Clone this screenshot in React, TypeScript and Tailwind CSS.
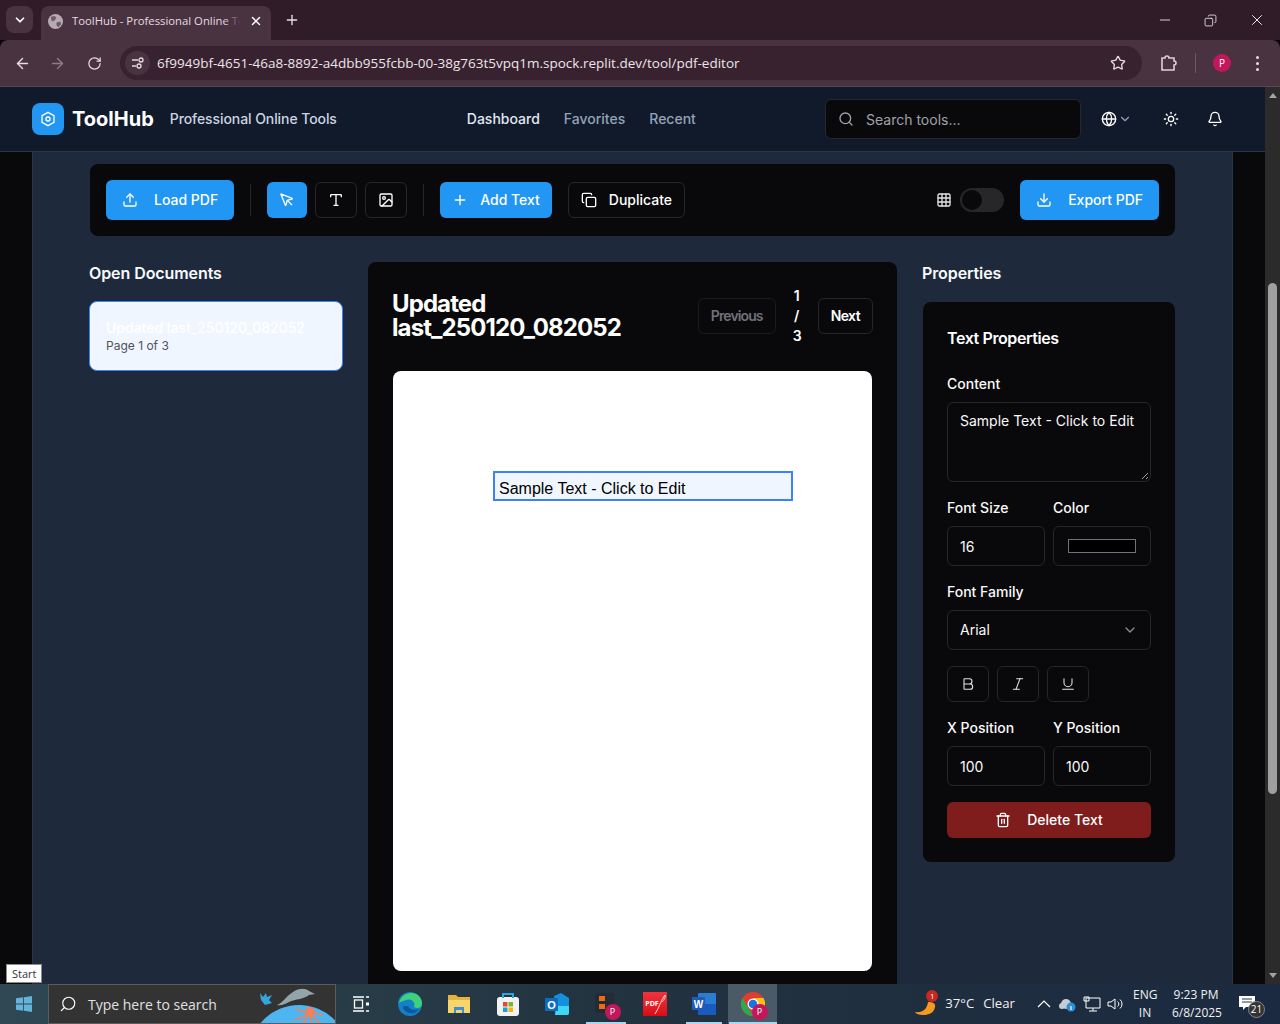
import {
  ArrowLeft, ArrowRight, Bell, Bold, ChevronDown, Copy, Download, Globe, Grid3x3, Image, Italic,
  MousePointer, Plus, RotateCw, Search, Star, Sun, Trash2, Type, Underline, Upload, X, Minus,
} from "lucide-react";
import type { ReactNode } from "react";

const inter = "font-['Inter',sans-serif]";
const segoe = "font-['Open_Sans',sans-serif]";

function BrowserBar() {
  return (
    <div className={`${segoe} shrink-0`}>
      <div className="flex h-10 items-end bg-[#2f1c28] pl-[6px]">
        <div className="mb-[1px] flex h-[27px] w-[27px] items-center justify-center self-center rounded-lg bg-[#4a3340] text-white">
          <ChevronDown size={14} strokeWidth={3} />
        </div>
        <div className="ml-[8px] flex h-[34px] w-[230px] items-center rounded-t-lg bg-[#4a3340] pb-1 pl-[7px]">
          <svg className="shrink-0" width="15" height="15" viewBox="0 0 16 16">
            <circle cx="8" cy="8" r="8" fill="#b8aab2" />
            <path d="M3 3l4-1 2 2-2 3-3 1zM9 9l4-1 1 3-3 3-2-2z" fill="#6d5b66" />
          </svg>
          <div className="relative ml-[9px] w-[168px] overflow-hidden text-[11.3px] whitespace-nowrap text-[#e4dce1]">
            ToolHub - Professional Online Tools
            <div className="absolute inset-y-0 right-0 w-4 bg-gradient-to-r from-transparent to-[#4a3340]" />
          </div>
          <X size={14} className="ml-[9px] text-white" strokeWidth={2.5} />
        </div>
        <Plus size={16} className="ml-[13px] self-center text-[#e8e0e5]" />
        <div className="flex-1" />
        <div className="flex items-center gap-[31px] self-center pr-[14px] text-white">
          <Minus size={16} strokeWidth={1.2} />
          <Copy size={13} strokeWidth={1.4} className="-scale-x-100" />
          <X size={18} strokeWidth={1.2} />
        </div>
      </div>
      <div className="flex h-[47px] items-center rounded-t-lg border-b border-[#5a4450] bg-[#4a3340] pl-[14px] pr-[14px] text-[#e4dce1]">
        <ArrowLeft size={17} />
        <ArrowRight size={17} className="ml-[18px] text-[#8d7b85]" />
        <RotateCw size={15} className="ml-[21px]" />
        <div className="ml-[18px] flex h-[34px] w-[1022px] items-center rounded-full bg-[#38222f] pl-[5px] pr-[16px]">
          <div className="flex h-6 w-[25px] items-center justify-center rounded-full bg-[#4a3340]">
            <svg width="14" height="14" viewBox="0 0 14 14" fill="none" stroke="#e4dce1" strokeWidth="1.3">
              <path d="M1 4h6M1 10h4" />
              <circle cx="10" cy="4" r="2" />
              <circle cx="8" cy="10" r="2" />
            </svg>
          </div>
          <span className="ml-[7px] text-[13.5px] text-[#ece5e9]">6f9949bf-4651-46a8-8892-a4dbb955fcbb-00-38g763t5vpq1m.spock.replit.dev/tool/pdf-editor</span>
          <div className="flex-1" />
          <Star size={16} className="text-[#e4dce1]" strokeWidth={2} />
        </div>
        <svg className="ml-[17px]" width="18" height="18" viewBox="0 0 18 18" fill="none" stroke="#e0cfd9" strokeWidth="1.6">
          <path d="M3 4h3a2 2 0 0 1 4 0h5v3a2 2 0 0 1 0 4v5H3z" />
        </svg>
        <div className="ml-[18px] h-5 w-px bg-[#6d5763]" />
        <div className="ml-[17px] flex h-[18px] w-[18px] items-center justify-center rounded-full bg-[#c2185b] text-[10px] text-white">P</div>
        <div className="ml-[25px] flex flex-col gap-[3px]">
          <span className="h-[3px] w-[3px] rounded-full bg-[#e4dce1]" />
          <span className="h-[3px] w-[3px] rounded-full bg-[#e4dce1]" />
          <span className="h-[3px] w-[3px] rounded-full bg-[#e4dce1]" />
        </div>
      </div>
    </div>
  );
}

function SiteHeader() {
  return (
    <header className="flex h-[65px] shrink-0 items-center border-b border-[#2a3648] bg-[#111a2b] pl-8 pr-[42px]">
      <div className="flex h-8 w-8 items-center justify-center rounded-lg bg-[#2196f3]">
        <svg width="16" height="16" viewBox="0 0 24 24" fill="none" stroke="white" strokeWidth="2">
          <path d="M12 2l9 5v10l-9 5-9-5V7z" />
          <circle cx="12" cy="12" r="3" />
        </svg>
      </div>
      <span className="ml-2 text-[20px] leading-7 font-bold text-white">ToolHub</span>
      <span className="ml-4 pb-px text-[14px] font-medium tracking-[-0.08px] text-[#cbd5e1]">Professional Online Tools</span>
      <nav className="ml-[130px] flex gap-6 pb-px text-[14px] font-medium">
        <span className="text-[#e2e8f0]">Dashboard</span>
        <span className="text-[#94a3b8]">Favorites</span>
        <span className="text-[#94a3b8]">Recent</span>
      </nav>
      <div className="flex-1" />
      <div className="flex h-10 w-[256px] items-center rounded-md border border-[#27272a] bg-[#09090b] pl-3">
        <Search size={16} className="text-[#a1a1aa]" />
        <span className="ml-3 text-[14px] text-[#a1a1aa]">Search tools...</span>
      </div>
      <Globe size={16} className="ml-[20px] text-white" />
      <ChevronDown size={14} className="ml-[1px] text-[#94a3b8]" />
      <Sun size={16} className="ml-[31px] text-white" />
      <Bell size={16} className="ml-[28px] text-white" />
    </header>
  );
}

function BlueButton({ icon, label, tall, gap }: { icon: ReactNode; label: string; tall?: boolean; gap: string }) {
  return (
    <div className={`flex items-center rounded-md bg-[#2196f3] text-[14px] font-medium text-white ${tall ? "h-10 px-4" : "h-9 px-3"} ${gap}`}>
      {icon}
      <span className="pb-px">{label}</span>
    </div>
  );
}

function ToolButton({ children, className }: { children: ReactNode; className?: string }) {
  return <div className={`flex h-9 w-[42px] items-center justify-center rounded-md border border-[#27272a] bg-[#09090b] text-white ${className ?? ""}`}>{children}</div>;
}

function Divider() {
  return <div className="h-8 w-px bg-[#27272a]" />;
}

function EditorToolbar() {
  return (
    <div className="ml-[57px] flex h-[72px] w-[1085px] items-center rounded-lg bg-[#09090b] px-4">
      <BlueButton tall gap="gap-4" icon={<Upload size={16} />} label="Load PDF" />
      <div className="mx-4"><Divider /></div>
      <div className="flex h-9 w-10 items-center justify-center rounded-md bg-[#2196f3] text-white"><MousePointer size={16} /></div>
      <ToolButton className="ml-2"><Type size={16} /></ToolButton>
      <ToolButton className="ml-2"><Image size={16} /></ToolButton>
      <div className="mx-4"><Divider /></div>
      <BlueButton gap="gap-3" icon={<Plus size={16} />} label="Add Text" />
      <div className="ml-4 flex h-9 items-center gap-3 rounded-md border border-[#27272a] px-3 text-[14px] font-medium text-white">
        <Copy size={16} />
        <span className="pb-px">Duplicate</span>
      </div>
      <div className="flex-1" />
      <Grid3x3 size={16} className="text-[#e4e4e7]" />
      <div className="ml-[8px] flex h-6 w-11 items-center rounded-full border-2 border-[#27272a] bg-[#27272a]">
        <div className="h-5 w-5 rounded-full bg-[#09090b]" />
      </div>
      <div className="ml-4">
        <BlueButton tall gap="gap-[16px]" icon={<Download size={16} />} label="Export PDF" />
      </div>
    </div>
  );
}

function DocumentsPanel() {
  return (
    <aside className="w-[254px] shrink-0">
      <h2 className="-mt-px text-[16px] leading-6 font-semibold tracking-[-0.08px] text-[#f8fafc]">Open Documents</h2>
      <div className="mt-4 h-[70px] rounded-lg border border-[#3b82f6] bg-[#eff6ff] px-4 pt-4">
        <p className="text-[14px] leading-5 font-medium text-white">Updated last_250120_082052</p>
        <p className="text-[12px] leading-4 text-[#52525b]">Page 1 of 3</p>
      </div>
    </aside>
  );
}

function PdfPanel() {
  return (
    <section className="ml-[25px] h-[800px] w-[529px] shrink-0 rounded-t-lg bg-[#09090b] px-6 pt-6">
      <div className="flex items-center">
        <h1 className="flex-1 text-[24px] leading-6 font-bold tracking-[-0.9px] text-white">
          Updated<br />last_250120_082052
        </h1>
        <div className="flex h-9 items-center rounded-md border border-[#1c1c1f] px-3 pb-px text-[14px] font-semibold tracking-[-0.9px] text-[#71717a]">Previous</div>
        <div className="mx-[17px] w-[8px] text-center text-[14px] leading-5 font-semibold text-white">1<br />/<br />3</div>
        <div className="flex h-9 items-center rounded-md border border-[#27272a] px-3 pb-px text-[14px] font-semibold tracking-[-0.6px] text-white">Next</div>
      </div>
      <div className="mt-[25px] ml-px h-[600px] w-[479px] rounded-lg bg-white p-[100px]">
        <div className="flex h-[30px] w-[300px] shrink-0 items-center border-2 border-[#3b82f6] bg-[#eff6ff] pt-[6px] pl-1 text-[16px] text-black font-['Liberation_Sans',sans-serif]">
          Sample Text - Click to Edit
        </div>
      </div>
    </section>
  );
}

function Field({ label, children, className }: { label: string; children: ReactNode; className?: string }) {
  return (
    <div className={className}>
      <div className="mb-2 text-[14px] leading-[20px] font-medium text-[#fafafa]">{label}</div>
      {children}
    </div>
  );
}

function Input({ children }: { children: ReactNode }) {
  return <div className="flex h-10 items-center rounded-md border border-[#27272a] px-3 text-[14px] text-[#fafafa]">{children}</div>;
}

function PropertiesPanel() {
  return (
    <aside className="ml-[26px] w-[252px] shrink-0">
      <h2 className="-mt-px -ml-px text-[16px] leading-6 font-semibold tracking-[-0.1px] text-[#f8fafc]">Properties</h2>
      <div className="mt-[17px] h-[560px] rounded-lg bg-[#09090b] px-6 pt-6">
        <h3 className="text-[16px] leading-6 font-semibold tracking-[-0.4px] text-white">Text Properties</h3>
        <Field label="Content" className="mt-[24px]">
          <div className="relative h-20 rounded-md border border-[#27272a] px-3 py-2 text-[14px] leading-5 text-[#fafafa]">
            Sample Text - Click to Edit
            <svg className="absolute right-[1px] bottom-[1px]" width="8" height="8" viewBox="0 0 8 8" stroke="#a1a1aa" strokeWidth="1">
              <path d="M1 7l6-6M5 7l2-2" />
            </svg>
          </div>
        </Field>
        <div className="mt-4 grid grid-cols-2 gap-2">
          <Field label="Font Size"><Input>16</Input></Field>
          <Field label="Color">
            <div className="flex h-10 items-center justify-center rounded-md border border-[#27272a]">
              <div className="h-[14px] w-[68px] border border-[#71717a] bg-black" />
            </div>
          </Field>
        </div>
        <Field label="Font Family" className="mt-4">
          <div className="flex h-10 items-center justify-between rounded-md border border-[#27272a] px-3 text-[14px] text-[#fafafa]">
            <span className="pb-px">Arial</span>
            <ChevronDown size={16} className="text-[#8b8b93]" />
          </div>
        </Field>
        <div className="mt-4 flex gap-2">
          <ToolButton><Bold size={16} strokeWidth={1.6} className="text-[#e4e4e7]" /></ToolButton>
          <ToolButton><Italic size={16} strokeWidth={1.6} className="text-[#e4e4e7]" /></ToolButton>
          <ToolButton><Underline size={16} strokeWidth={1.6} className="text-[#e4e4e7]" /></ToolButton>
        </div>
        <div className="mt-4 grid grid-cols-2 gap-2">
          <Field label="X Position"><Input>100</Input></Field>
          <Field label="Y Position"><Input>100</Input></Field>
        </div>
        <div className="mt-4 flex h-9 items-center justify-center gap-4 rounded-md bg-[#7f1d1d] text-[14px] font-medium text-white">
          <Trash2 size={16} />
          <span className="pb-px">Delete Text</span>
        </div>
      </div>
    </aside>
  );
}

function PageScrollbar() {
  return (
    <div className="flex w-[15px] shrink-0 flex-col items-center justify-between bg-[#2b2b2b] py-[6px]">
      <div className="h-0 w-0 border-x-[4px] border-b-[5px] border-x-transparent border-b-[#a3a3a3]" />
      <div className="mt-[185px] mb-[179px] w-[9px] flex-1 rounded-full bg-[#9f9f9f]" />
      <div className="h-0 w-0 border-x-[4px] border-t-[5px] border-x-transparent border-t-[#a3a3a3]" />
    </div>
  );
}

function Badge() {
  return <span className="absolute -right-[3px] -bottom-[4px] flex h-4 w-4 items-center justify-center rounded-full bg-[#c2185b] text-[9px] text-white">P</span>;
}

function TaskSlot({ children, active, line }: { children: ReactNode; active?: boolean; line?: string }) {
  return (
    <div className={`relative flex h-10 w-[49px] shrink-0 items-center justify-center ${active ? "bg-[#4a5a67]" : ""}`}>
      <div className="relative h-6 w-6">{children}</div>
      {line && <div className={`absolute bottom-0 h-[2px] bg-[#a8d8f0] ${line}`} />}
    </div>
  );
}

function Taskbar() {
  return (
    <div className={`${segoe} relative flex h-10 shrink-0 items-center bg-gradient-to-r from-[#2f4853] via-[#22323f] to-[#1b2a40] text-white`}>
      <div className="absolute -top-[20px] left-[6px] border border-[#8a8a8a] bg-white px-[5px] text-[11px] leading-[17px] text-[#333]">Start</div>
      <div className="flex w-12 items-center justify-center">
        <svg width="16" height="16" viewBox="0 0 17 17" fill="#63b3dc">
          <path d="M0 2.4L7.5 1.3v6.800H0zM8.400 1.200L17 0v8.100H8.400zM0 9h7.500v6.800L0 14.700zM8.400 9H17v8l-8.600-1.200z" />
        </svg>
      </div>
      <div className="relative flex h-10 w-[288px] items-center overflow-hidden border border-[#5c5c5c] bg-[#333] pl-[10px]">
        <Search size={18} strokeWidth={1.5} className="-scale-x-100 text-white" />
        <span className="ml-[11px] text-[14px] text-[#e0e0e0]">Type here to search</span>
        <svg className="absolute top-0 right-0" width="80" height="40" viewBox="0 0 80 40">
          <circle cx="44" cy="70" r="50" fill="#4db6f0" />
          <path d="M22 20C28 18 30 12 38 7C44 3 50 3 54 6L60 9L54 10C50 14 40 14 34 17C30 19 26 21 22 20z" fill="#93a5aa" />
          <path d="M5 8l3 4 3-4 1 4 5-2-3 5 3 3-7 2-4-5z" fill="#36a5dc" />
          <circle cx="55" cy="27" r="5" fill="#f0805f" />
          <path d="M52 30l-12 5M53 31l-6 9M56 32l1 8M58 31l7 8M50 27l-9-3M60 28l8 3" stroke="#f0805f" strokeWidth="1.800" fill="none" />
        </svg>
      </div>
      <TaskSlot>
        <svg className="m-1" width="16" height="16" viewBox="0 0 16 16" fill="none" stroke="white" strokeWidth="1.300">
          <path d="M0 1h11M0 15h11M13 1h3M13 15h3" />
          <rect x="1.500" y="4" width="8" height="8" />
          <rect x="13" y="6.500" width="3" height="3" fill="white" stroke="none" />
        </svg>
      </TaskSlot>
      <TaskSlot>
        <svg width="24" height="24" viewBox="0 0 24 24">
          <circle cx="12" cy="12" r="12" fill="#1480c8" />
          <path d="M1 11C3 2 12-1 18 2c4 2 6 6 6 10 0 4-5 5-8 3 2-5-3-9-8-7-3 1-6 2-7 3z" fill="#3fd07b" />
          <path d="M5 14c0 6 6 8 11 7 2-1 4-2 5-4-4 2-9 1-11-3z" fill="#0c5a9e" />
        </svg>
      </TaskSlot>
      <TaskSlot>
        <svg width="24" height="24" viewBox="0 0 24 24">
          <path d="M1 3h8l2 2h12v16H1z" fill="#e8b33c" />
          <path d="M1 8h22v13H1z" fill="#f8d56b" />
          <path d="M7 21v-6h10v6h-2v-3H9v3z" fill="#3d8fd1" />
        </svg>
      </TaskSlot>
      <TaskSlot>
        <svg width="24" height="24" viewBox="0 0 24 24">
          <rect x="1" y="5" width="22" height="19" rx="3" fill="#f2f2f2" />
          <path d="M7 6V2h10v4" stroke="#26a8e0" strokeWidth="2" fill="none" />
          <rect x="7" y="10" width="4.500" height="4.500" fill="#e8492e" />
          <rect x="12.500" y="10" width="4.500" height="4.500" fill="#7ab829" />
          <rect x="7" y="15.500" width="4.500" height="4.500" fill="#1f9be0" />
          <rect x="12.500" y="15.500" width="4.500" height="4.500" fill="#f8b400" />
        </svg>
      </TaskSlot>
      <TaskSlot>
        <svg width="24" height="24" viewBox="0 0 24 24">
          <path d="M9 4l7-3 8 5v15a2 2 0 0 1-2 2H10z" fill="#1490df" />
          <path d="M12 14h12v7a2 2 0 0 1-2 2H10z" fill="#3fd5f5" />
          <rect x="0" y="6" width="13" height="13" fill="#0f6cbd" />
          <text x="6.500" y="16.500" textAnchor="middle" fontSize="11" fontWeight="700" fill="white" fontFamily="Liberation Sans, sans-serif">O</text>
        </svg>
      </TaskSlot>
      <TaskSlot line="w-10">
        <svg width="24" height="24" viewBox="0 0 24 24">
          <rect x="1" y="1" width="19" height="20" rx="3" fill="#232a38" />
          <rect x="5" y="4" width="6" height="5" fill="#f06a0f" />
          <rect x="5" y="12" width="6" height="5" fill="#f06a0f" />
        </svg>
        <Badge />
      </TaskSlot>
      <TaskSlot>
        <div className="relative flex h-6 w-6 items-center justify-center bg-gradient-to-b from-[#f0323c] to-[#d80a14] text-[7px] font-bold text-white">
          <span className="mr-[5px]">PDF</span>
          <svg className="absolute inset-0" width="24" height="24" viewBox="0 0 24 24" fill="none" stroke="white" strokeWidth="0.8">
            <path d="M12 22C16 16 18 8 22 3c1 2-1 5-3 7" />
          </svg>
        </div>
      </TaskSlot>
      <TaskSlot line="w-9">
        <svg width="24" height="24" viewBox="0 0 24 24">
          <rect x="6" y="1" width="18" height="22" rx="1" fill="#2b7cd3" />
          <path d="M6 12h18v11H6z" fill="#185abd" />
          <rect x="0" y="5" width="13" height="13" fill="#1e5cb8" />
          <text x="6.500" y="15.500" textAnchor="middle" fontSize="10" fontWeight="700" fill="white" fontFamily="Liberation Sans, sans-serif">W</text>
        </svg>
      </TaskSlot>
      <TaskSlot active line="w-12">
        <svg width="24" height="24" viewBox="0 0 24 24">
          <circle cx="12" cy="12" r="12" fill="#e33b2e" />
          <path d="M12 24A12 12 0 0 1 1.600 6l6 10.500z" fill="#2da94f" />
          <path d="M12 24a12 12 0 0 0 10.400-18H12l4.500 10z" fill="#fbc116" />
          <circle cx="12" cy="12" r="5.500" fill="#fff" />
          <circle cx="12" cy="12" r="4.300" fill="#1a73e8" />
        </svg>
        <Badge />
      </TaskSlot>
      <div className="flex-1" />
      <div className="relative mr-[8px] h-6 w-6">
        <svg width="24" height="24" viewBox="0 0 24 24">
          <path d="M2 20c8 1 12-3 13-10 4 0 8 1 7 5-1 6-6 8-12 8-4 0-7-1-8-3z" fill="#f59a1e" />
        </svg>
        <span className="absolute -top-[2px] right-[-1px] flex h-3 w-3 items-center justify-center rounded-full bg-[#c8281e] text-[8px]">1</span>
      </div>
      <span className="text-[13.2px] text-[#f0f0f0]">37°C</span>
      <span className="ml-[9px] text-[13.2px] text-[#f0f0f0]">Clear</span>
      <svg className="ml-[22px]" width="14" height="14" viewBox="0 0 14 14" fill="none" stroke="white" strokeWidth="1.200">
        <path d="M1 10l6-6 6 6" />
      </svg>
      <svg className="ml-[7px]" width="18" height="16" viewBox="0 0 18 16">
        <circle cx="8" cy="8" r="5" fill="#c5ccd2" />
        <circle cx="4" cy="10" r="3" fill="#c5ccd2" />
        <circle cx="13" cy="11" r="4.500" fill="#2a8fd8" />
        <rect x="12.400" y="10" width="1.200" height="4" fill="white" />
      </svg>
      <svg className="ml-[7px]" width="18" height="16" viewBox="0 0 18 16" fill="none" stroke="white" strokeWidth="1">
        <path d="M3 2h14v10H3zM6 15h8M10 12v3M1 1h5v4H1z" />
      </svg>
      <svg className="ml-[6px]" width="18" height="16" viewBox="0 0 18 16" fill="none" stroke="white" strokeWidth="1">
        <path d="M1 6v4h3l4 3V3L4 6zM10.500 5.500a3 3 0 0 1 0 5M13 3.500a6 6 0 0 1 0 9" />
      </svg>
      <div className="ml-[8px] w-[24px] text-center text-[12px] leading-[18px] text-[#f0f0f0]">ENG<br />IN</div>
      <div className="ml-[15px] w-[48px] text-center text-[12px] leading-[18px] whitespace-nowrap text-[#f0f0f0]">9:23 PM<br />6/8/2025</div>
      <div className="relative mr-[22px] ml-[18px] h-[22px] w-[20px]">
        <svg width="18" height="18" viewBox="0 0 18 18" fill="white" className="mt-[1px]">
          <path d="M1 2h16v11H8l-3 3v-3H1z" />
          <path d="M4 5h10M4 8h10" stroke="#24344a" strokeWidth="1" />
        </svg>
        <span className="absolute -right-[7px] -bottom-[3px] flex h-[17px] w-[17px] items-center justify-center rounded-full border border-[#888] bg-[#333] text-[10px] text-white">21</span>
      </div>
    </div>
  );
}

export default function App() {
  return (
    <div className={`${inter} flex h-[1024px] w-[1280px] flex-col overflow-hidden bg-black`}>
      <BrowserBar />
      <div className="flex min-h-0 flex-1">
        <div className="flex min-w-0 flex-1 flex-col">
          <SiteHeader />
          <div className="flex min-h-0 flex-1 overflow-hidden bg-[#09090b]">
            <div className="ml-8 w-[1201px] shrink-0 overflow-hidden border-x border-[#2a3648] bg-[#1e2a3c] pt-3">
              <EditorToolbar />
              <div className="mt-[26px] ml-[56px] flex">
                <DocumentsPanel />
                <PdfPanel />
                <PropertiesPanel />
              </div>
            </div>
          </div>
        </div>
        <PageScrollbar />
      </div>
      <Taskbar />
    </div>
  );
}
